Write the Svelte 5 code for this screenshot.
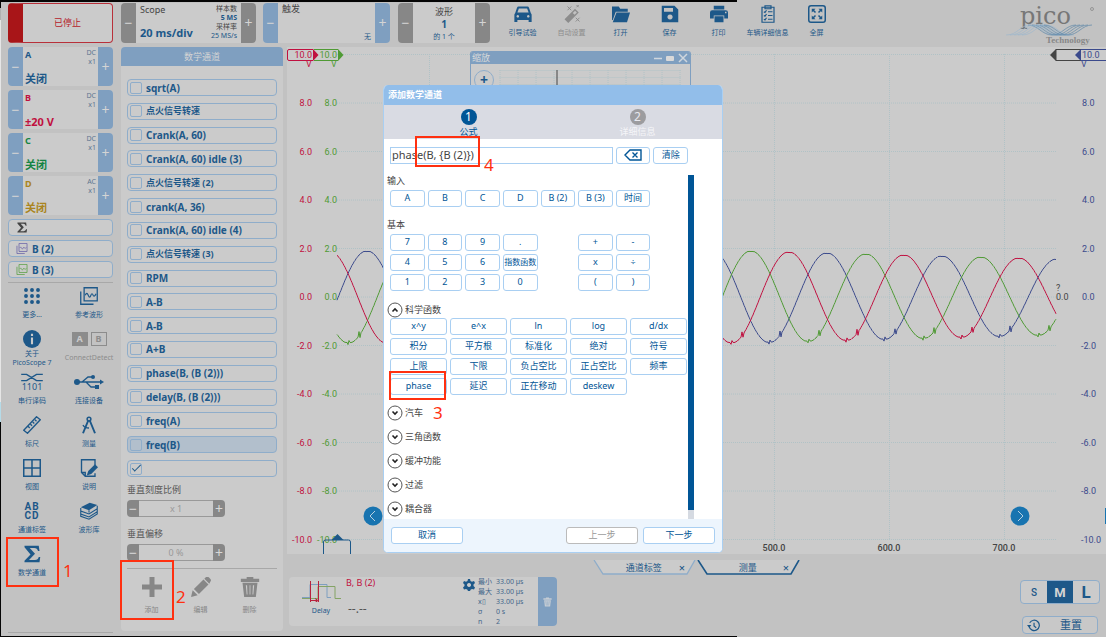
<script>
    const channels = [
        { name: 'A', coupling: 'DC', range: '关闭', tone: 'blue' },
        { name: 'B', coupling: 'DC', range: '±20 V', tone: 'red' },
        { name: 'C', coupling: 'DC', range: '关闭', tone: 'green' },
        { name: 'D', coupling: 'AC', range: '关闭', tone: 'gold' }
    ];

    const toolbar = [
        { icon: 'car', label: '引导试验' },
        { icon: 'wand', label: '自动设置', off: true },
        { icon: 'folder', label: '打开' },
        { icon: 'save', label: '保存' },
        { icon: 'print', label: '打印' },
        { icon: 'clipboard', label: '车辆详细信息' },
        { icon: 'full', label: '全屏' }
    ];

    const tools = [
        { icon: 'more', label: '更多...' },
        { icon: 'ref', label: '参考波形' },
        { icon: 'about', label: '关于\nPicoScope 7' },
        { icon: 'detect', label: 'ConnectDetect', off: true },
        { icon: 'serial', label: '串行译码' },
        { icon: 'usb', label: '连接设备' },
        { icon: 'ruler', label: '标尺' },
        { icon: 'compass', label: '测量' },
        { icon: 'views', label: '视图' },
        { icon: 'notes', label: '说明' },
        { icon: 'abcd', label: '通道标签' },
        { icon: 'books', label: '波形库' },
        { icon: 'sigma', label: '数学通道' }
    ];

    let mathChannels = $state([
        'sqrt(A)', '点火信号转速', 'Crank(A, 60)', 'Crank(A, 60) idle (3)', '点火信号转速 (2)',
        'crank(A, 36)', 'Crank(A, 60) idle (4)', '点火信号转速 (3)', 'RPM', 'A-B', 'A-B', 'A+B',
        'phase(B, (B (2)))', 'delay(B, (B (2)))', 'freq(A)', 'freq(B)', ''
    ].map((name) => ({ name, on: name === '' })));

    const inputs = ['A', 'B', 'C', 'D', 'B (2)', 'B (3)', '时间'];
    const keypad = [
        ['7', '8', '9', '.', null, '+', '-'],
        ['4', '5', '6', '指数函数', null, 'x', '÷'],
        ['1', '2', '3', '0', null, '(', ')']
    ].flat();
    const functions = [
        'x^y', 'e^x', 'ln', 'log', 'd/dx',
        '积分', '平方根', '标准化', '绝对', '符号',
        '上限', '下限', '负占空比', '正占空比', '频率',
        'phase', '延迟', '正在移动', 'deskew'
    ];
    const groups = ['汽车', '三角函数', '缓冲功能', '过滤', '耦合器'];
    const stats = [['最小', '33.00 µs'], ['最大', '33.00 µs'], ['x▯', '33.00 µs'], ['σ', '0 s'], ['n', '2']];

    let formula = $state('phase(B, {B (2)})');
    let size = $state('M');

    // Plot geometry
    const top = 54.5;
    const step = 48.5;
    const zero = 297;
    const volts = [10, 8, 6, 4, 2, 0, -2, -4, -6, -8, -10];
    const times = [429, 544, 659, 774, 889, 1004];

    // One trace: a sine with flat peaks that decays a little, with spikes around each trough
    function trace(peak) {
        const period = 115;
        let d = '';
        for (let x = 337; x <= 1056; x += 1) {
            const amp = x < 751 ? 45.5 : 45.5 - (x - 751) * 0.026;
            const phase = ((x - peak) % period + period) % period;
            const s = Math.cos((phase / period) * 2 * Math.PI);
            let y = zero - amp * Math.max(-1, Math.min(1, s * 1.015));
            y += Math.sin(x * 2.7 + peak) * 0.2;
            const k = Math.floor(phase);
            if (k === 57) y += 2;
            if (k === 58) y -= 2;
            if (k === 68) y -= 4;
            if (k === 69) y += 3;
            d += (d ? 'L' : 'M') + x + ' ' + y.toFixed(1);
        }
        return d;
    }

    const traces = [
        { tone: 'navy', d: trace(827) },
        { tone: 'green', d: trace(751) },
        { tone: 'red', d: trace(789) }
    ];
</script>

{#snippet icon(name)}
    <svg class="icon {name}" viewBox="0 0 24 24" aria-hidden="true">
        {#if name === 'car'}
            <path fill="currentColor" fill-rule="evenodd" d="M6 2h12q1.500 0 2 1.500L22.500 11q1 1 1 2v9.500h-4V20h-15v2.500h-4V13q0-1 1-2L4 3.500Q4.500 2 6 2zm.5 2.500L4.500 10h15l-2-5.500zM5 13.300a1.700 1.700 0 1 0 .1 0zm14 0a1.700 1.700 0 1 0 .1 0z" />
        {:else if name === 'wand'}
            <path fill="currentColor" fill-rule="evenodd" d="M2 19L16 5l5 5L7 24zM13 10.500l2.500 2.500L18.500 10 16 7.500z" />
            <path stroke="currentColor" stroke-width="1.300" d="M6 2l5 5m0-5L6 7m12-7l3 3m0-3l-3 3m-1 14l5 5m0-5l-5 5" />
        {:else if name === 'folder'}
            <path fill="currentColor" d="M0 2h9l2 3h10v4H5L1 20H0z" /><path fill="currentColor" d="M6 10h18l-4 13H1z" />
        {:else if name === 'save'}
            <path fill="currentColor" fill-rule="evenodd" d="M1 1h17l5 5v17H1zm3 3v5h12V4zm8 8.500a3.500 3.500 0 1 0 .1 0z" />
        {:else if name === 'print'}
            <path fill="currentColor" fill-rule="evenodd" d="M5 1h14v5H5zM3 7h18q3 0 3 3v8h-5v-4H5v4H0v-8q0-3 3-3zm17 2v2h2V9zM6 15h12v8H6z" />
        {:else if name === 'clipboard'}
            <path fill="none" stroke="currentColor" stroke-width="1.600" d="M4 3h16v20H4zM8 1h8v4H8z" />
            <path fill="none" stroke="currentColor" stroke-width="1.600" d="M6.500 9l1.500 1 2-3m2 2h6M6.500 14l1.500 1 2-3m2 2h6M6.500 19l1.500 1 2-3m2 2h6" />
        {:else if name === 'full'}
            <rect x="1" y="1" width="22" height="22" rx="3" fill="none" stroke="currentColor" stroke-width="2" />
            <path fill="currentColor" d="M5 5h5L5 10zm14 0v5l-5-5zM5 19v-5l5 5zm14 0h-5l5-5z" />
            <path stroke="currentColor" stroke-width="2" d="M6 6l4 4m8-4l-4 4m-8 8l4-4m8 4l-4-4" />
        {:else if name === 'more'}
            {#each [4, 12, 20] as cy}{#each [4, 12, 20] as cx}<circle {cx} {cy} r="2.600" fill="currentColor" />{/each}{/each}
        {:else if name === 'ref'}
            <path fill="none" stroke="currentColor" stroke-width="1.700" d="M1 6v17h17M5.500 1H23v17.500H5.500z" />
            <path fill="none" stroke="currentColor" stroke-width="1.500" d="M7 11q2-5 4 0 2 5 3.500 0 1.500-4 3 0 1.500 3 4-2" />
        {:else if name === 'about'}
            <circle cx="12" cy="12" r="12" fill="currentColor" /><path stroke="#cbcbcb" stroke-width="2.800" d="M12 10v9M12 5v3" />
        {:else if name === 'ruler'}
            <path fill="none" stroke="currentColor" stroke-width="1.800" d="M1 19L18 1l5 4L6 23zM7 14l2 2m1-5l2 2m1-5l2 2m1-5l2 2" />
        {:else if name === 'compass'}
            <path fill="none" stroke="currentColor" stroke-width="2.600" d="M11 6L4 23m9-17l7 17" /><path fill="none" stroke="currentColor" stroke-width="1.800" d="M4 12q2 4 8 4" /><circle cx="12" cy="4" r="2.500" fill="none" stroke="currentColor" stroke-width="2" />
        {:else if name === 'views'}
            <path fill="none" stroke="currentColor" stroke-width="2" d="M1 1h22v22H1zM12 1v22M1 12h22" />
        {:else if name === 'notes'}
            <path fill="none" stroke="currentColor" stroke-width="1.800" d="M20 8V1H2v17l5 5h13v-4M2 18h5v5" /><path fill="currentColor" d="M20 7l4 4-9 9-6 2 2-6z" />
        {:else if name === 'books'}
            <path fill="currentColor" d="M1 7L13 1l10 3-11 7z" /><path fill="none" stroke="currentColor" stroke-width="1.500" d="M1 8v4l11 4 11-7V5M1 12v4l11 4 11-7V9M1 16v3l11 4 11-7v-3M12 11v3" />
        {:else if name === 'sigma'}
            <path fill="currentColor" d="M2 1h19l1 7h-2q-1-4-5-4H9l7 7.500L8 20h8q4 0 5-4h2l-1 7H2v-2l8-8.500L2 3z" />
        {:else if name === 'plus'}
            <path fill="currentColor" d="M9 0h6v9h9v6h-9v9H9v-9H0V9h9z" />
        {:else if name === 'pencil'}
            <path fill="currentColor" d="M0 24l2-8 6 6zM3.500 14.500L15 3l6 6L9.500 20.500zM16 2l2-2q2-1 4 1l1 1q2 2 0 4l-1 2z" />
        {:else if name === 'trash'}
            <path fill="currentColor" fill-rule="evenodd" d="M8 0h8v2h7v4H1V2h7zM3 7h18l-2 17H5zm4 3l1 11h1L8.500 10zm4.500 0v11h1V10zm4 0L15 21h1l1-11z" />
        {:else if name === 'gear'}
            <path fill="currentColor" fill-rule="evenodd" d="M10 0h4l1 4 3 1.500 4-1.500 2 4-3 3v3l3 3-2 4-4-1-3 1.500-1 3h-4l-1-3L6 20l-4 1-2-4 3-3v-3L0 8l2-4 4 1.500L9 4zm2 8a4 4 0 1 0 .1 0z" />
        {:else if name === 'history'}
            <path fill="none" stroke="currentColor" stroke-width="2.200" d="M4 14a9.500 9.500 0 1 0 1-7M13 7v6l4 3" /><path fill="currentColor" d="M0 11h8l-4 5z" />
        {/if}
    </svg>
{/snippet}

{#snippet toolIcon(name)}
    {#if name === 'detect'}
        <span class="detect"><b>A</b><b>B</b></span>
    {:else if name === 'serial'}
        <span class="serial">
            <svg viewBox="0 0 24 10"><path fill="none" stroke="currentColor" stroke-width="1.600" d="M0 1.500h6l11 7h7M0 8.500h6l11-7h7" /></svg>1101
        </span>
    {:else if name === 'usb'}
        <svg class="usb" viewBox="0 0 30 16" aria-hidden="true">
            <circle cx="3" cy="8" r="3" fill="currentColor" /><path fill="none" stroke="currentColor" stroke-width="1.300" d="M3 8h24M8 8l6-5h4M12 8l5 5h5" />
            <path fill="currentColor" d="M26 5.500l4 2.500-4 2.500z" /><circle cx="19" cy="3" r="2" fill="currentColor" /><path fill="currentColor" d="M21 11h4v4h-4z" />
        </svg>
    {:else if name === 'abcd'}
        <span class="abcd">AB<br />CD</span>
    {:else}
        {@render icon(name)}
    {/if}
{/snippet}

<div class="app">
    <header class="top">
        <button class="stopped">已停止</button>
        <div class="stepper grey scope">
            <button>−</button>
            <div class="mid split">
                <div class="stack"><span>Scope</span><b class="big">20 ms/div</b></div>
                <div class="stack tiny"><span>样本数</span><b>5 MS</b><span>采样率</span><em>25 MS/s</em></div>
            </div>
            <button>+</button>
        </div>
        <div class="stepper trigger">
            <button>−</button>
            <div class="mid stack"><span>触发</span><em class="none">无</em></div>
            <button>+</button>
        </div>
        <div class="stepper grey wave">
            <button>−</button>
            <div class="mid centre"><span>波形</span><b>1</b><em>的 1 个</em></div>
            <button>+</button>
        </div>
        <nav class="toolbar">
            {#each toolbar as t}
                <button class="tool" disabled={t.off}>{@render icon(t.icon)}<span>{t.label}</span></button>
            {/each}
        </nav>
        <svg class="logo" viewBox="0 0 92 44" role="img" aria-label="pico Technology">
            <text class="pico" x="14" y="21">pico</text>
            <circle cx="86" cy="6" r="1.500" fill="none" stroke="#777" stroke-width=".6" />
            {#each [0, 4, 8, 12, 16] as o}
                <path fill="none" stroke="#9db8cd" stroke-width=".7" d="M{o} 32c12 0 14-10 24-10s14 10 24 10h4" />
                <path fill="none" stroke="#5d87a8" stroke-width=".7" d="M{o + 22} 22c10 0 14 10 24 10s14-10 24-10" />
            {/each}
            <text class="tech" x="40" y="40">Technology</text>
        </svg>
    </header>

    <div class="body">
        <aside class="left">
            {#each channels as c}
                <div class="stepper channel {c.tone}">
                    <button>−</button>
                    <div class="mid split">
                        <div class="stack"><b class="name">{c.name}</b><b class="big">{c.range}</b></div>
                        <div class="stack coupling"><span>{c.coupling}</span><span>x1</span></div>
                    </div>
                    <button>+</button>
                </div>
            {/each}
            <button class="quick dark">{@render icon('sigma')}</button>
            <button class="quick violet">{@render icon('ref')}<b>B (2)</b></button>
            <button class="quick lime">{@render icon('ref')}<b>B (3)</b></button>
            <div class="tools">
                {#each tools as t}
                    <button class="tool" class:two-line={t.label.includes('\n')} disabled={t.off}>
                        {@render toolIcon(t.icon)}<span>{t.label}</span>
                    </button>
                {/each}
            </div>
        </aside>

        <section class="math">
            <h2>数学通道</h2>
            <div class="list">
                {#each mathChannels as m}
                    <label class="item" class:hot={m.name === 'freq(B)'} class:latin={/^[\x20-\x7e]+$/.test(m.name)}>
                        <input type="checkbox" bind:checked={m.on} aria-label={m.name || 'phase'} />{m.name}
                    </label>
                {/each}
            </div>
            <label class="caption" for="scale">垂直刻度比例</label>
            <div class="spin"><button>−</button><input id="scale" value="x 1" disabled /><button>+</button></div>
            <label class="caption" for="offset">垂直偏移</label>
            <div class="spin"><button>−</button><input id="offset" value="0 %" disabled /><button>+</button></div>
            <div class="actions">
                <button class="tool">{@render icon('plus')}<span>添加</span></button>
                <button class="tool">{@render icon('pencil')}<span>编辑</span></button>
                <button class="tool">{@render icon('trash')}<span>删除</span></button>
            </div>
        </section>

        <main>
            <div class="plot">
                <svg viewBox="287 47 819 507">
                    {#each volts as v, i}
                        <path class="grid" d="M337 {top + i * step}H1056" />
                        {#if i > 0}
                            <text class="red end" x="312" y={top + i * step + 3}>{v.toFixed(1)}</text>
                            <text class="green end" x="337" y={top + i * step + 3}>{v.toFixed(1)}</text>
                            <text class="navy" x={v < 0 ? 1081 : 1082} y={top + i * step + 3}>{v.toFixed(1)}</text>
                        {/if}
                    {/each}
                    {#each times as x}<path class="grid" d="M{x}.5 54V540" />{/each}
                    {#each traces as t}<path class="trace {t.tone}" d={t.d} />{/each}

                    <path class="frame red" d="M313 49.500H289q-1.500 0-1.500 1.500v8q0 1.500 1.500 1.500h24" />
                    <path class="fill red" d="M313 49v12l5.500-6z" />
                    <path class="frame green" d="M314 49.500h24M314 60.500h24" />
                    <path class="fill green" d="M338 49v12l5.500-6z" />
                    <text class="red end" x="312" y="58">10.0</text><text class="red" x="306" y="67">V</text>
                    <text class="green end" x="337" y="58">10.0</text><text class="green" x="331" y="67">V</text>
                    <path class="frame dark" d="M1106 49.500h-50v11h50" />
                    <path class="fill dark" d="M1056 49v12l-6-6z" />
                    <path class="frame navy" d="M1081 49.500h25M1081 60.500h25" />
                    <path class="fill navy" d="M1081 49v12l-6-6z" />
                    <text class="navy" x="1082" y="58">10.0</text><text class="navy" x="1081" y="67">V</text>
                    <text class="dark" x="1056" y="291">?</text><text class="dark" x="1056" y="300">0.0</text>

                    <path class="frame blue" d="M323.500 554v-12q0-2 2-2h23q2 0 2 2v12" />
                    <path class="fill blue" d="M331.500 540l6-6 6 6z" />
                    {#each ['500.0', '600.0', '700.0'] as t, i}
                        <text class="dark middle" x={774 + i * 115} y="551">{t}</text>
                    {/each}
                    <circle class="knob" cx="373" cy="516" r="9.500" /><path class="arrow" d="M375 511l-5 5 5 5" />
                    <circle class="knob" cx="1020" cy="516" r="9.500" /><path class="arrow" d="M1018 511l5 5-5 5" />
                    <path class="knob" d="M1105 508h1v16h-1z" />
                </svg>

                <section class="zoom">
                    <header>缩放
                        <svg viewBox="0 0 34 10"><path stroke="#cfd6dd" stroke-width="1.500" d="M0 5.500h8M25 1l8 8m0-8l-8 8" /><rect x="12" y="3" width="8" height="5" rx="1" fill="#d9d9d9" /></svg>
                    </header>
                    <div class="zoom-body">
                        <button class="zoom-in" aria-label="放大">+</button>
                        <svg viewBox="0 0 184 40">
                            {#each Array(11) as _, i}<path class="grid" d="M{i * 18 + 1}.5 0V40" />{/each}
                            {#each Array(6) as _, i}<path class="grid" d="M1 {i * 7}.5H182" />{/each}
                            <path class="frame dark" d="M58.500 0V40" />
                        </svg>
                    </div>
                </section>
            </div>

            <footer class="bottom">
                <div class="measure">
                    <div class="delay">
                        <svg viewBox="0 0 40 22">
                            <path fill="none" stroke="#7f9fc0" d="M1 17.500h8V4.500h17v13h4" /><path fill="none" stroke="#84a365" d="M1 18.500h16V6.500h17v12h6" />
                            <path fill="none" stroke="#b8203c" d="M9.500 1v21M17.500 1v21M10 20.500h6m-2-2l3 2-3 2" />
                        </svg>
                        <span>Delay</span>
                    </div>
                    <div class="reading"><span>B, B (2)</span><i>--.--</i></div>
                    {@render icon('gear')}
                    <table>
                        <tbody>
                            {#each stats as [k, v]}<tr><th>{k}</th><td>{v}</td></tr>{/each}
                        </tbody>
                    </table>
                    <button class="remove" aria-label="删除">{@render icon('trash')}</button>
                </div>
                <div class="tabs">
                    <button class="tab">
                        <svg viewBox="0 0 103 15"><path fill="#cbcbcb" stroke="#8fadca" stroke-width="1.300" d="M1 0l9 14h84l8-14" /></svg>
                        <span>通道标签</span><b>×</b>
                    </button>
                    <button class="tab current">
                        <svg viewBox="0 0 103 15"><path fill="#cbcbcb" stroke="#1d5889" stroke-width="1.600" d="M1 0l9 14h84l8-14" /></svg>
                        <span>测量</span><b>×</b>
                    </button>
                </div>
                <div class="corner">
                    <div class="sizes">
                        {#each ['S', 'M', 'L'] as s}
                            <button class="size{s}" class:on={size === s} onclick={() => (size = s)}>{s}</button>
                        {/each}
                    </div>
                    <button class="reset">{@render icon('history')}<span>重置</span></button>
                </div>
            </footer>
        </main>
    </div>

    <div class="overlay">
        <div class="dialog" role="dialog" aria-labelledby="dlg-title">
            <h1 id="dlg-title">添加数学通道</h1>
            <ol class="steps">
                <li class="now"><i>1</i>公式</li>
                <li><i>2</i>详细信息</li>
            </ol>
            <div class="keys entry">
                <input bind:value={formula} aria-label="公式" />
                <button aria-label="退格" onclick={() => (formula = formula.slice(0, -1))}>
                    <svg viewBox="0 0 18 12"><path fill="none" stroke="currentColor" stroke-width="1.400" d="M6 1h11v10H6L1 6zM8.500 3.500l5 5m0-5l-5 5" /></svg>
                </button>
                <button onclick={() => (formula = '')}>清除</button>
            </div>
            <div class="scroll">
                <div class="content">
                    <h3>输入</h3>
                    <div class="keys">
                        {#each inputs as k}<button>{k}</button>{/each}
                    </div>
                    <h3>基本</h3>
                    <div class="keys pad">
                        {#each keypad as k}
                            {#if k}<button class:small={k.length > 2}>{k}</button>{:else}<span></span>{/if}
                        {/each}
                    </div>
                    <button class="fold open">
                        <svg viewBox="0 0 16 16"><circle cx="8" cy="8" r="7" /><path d="M5.500 9.500L8 7l2.500 2.500" /></svg>科学函数
                    </button>
                    <div class="keys fns">
                        {#each functions as f}<button>{f}</button>{/each}
                    </div>
                    {#each groups as g}
                        <button class="fold">
                            <svg viewBox="0 0 16 16"><circle cx="8" cy="8" r="7" /><path d="M5.500 6.500L8 9l2.500-2.500" /></svg>{g}
                        </button>
                    {/each}
                </div>
                <div class="bar"></div>
            </div>
            <div class="buttons">
                <button>取消</button>
                <button class="back" disabled>上一步</button>
                <button>下一步</button>
            </div>
        </div>
    </div>

    <div class="mark m1"><span>1</span></div>
    <div class="mark m2"><span>2</span></div>
    <div class="mark m3"><span>3</span></div>
    <div class="mark m4"><span>4</span></div>
</div>

<style>
    :global(body) {
        margin: 0;
        background: #c2c2c2;
    }
    .app {
        position: relative;
        box-sizing: border-box;
        min-height: 100vh;
        padding: 3px 0 0 8px;
        display: flex;
        flex-direction: column;
        gap: 4px;
        overflow: hidden;
        font-family: "Noto Sans", "Noto Sans CJK SC", sans-serif;
        font-size: 9px;
        line-height: 12px;
        color: #1d5889;
        background:
            linear-gradient(#050505, #050505) 0 0 / 737px 2px no-repeat,
            linear-gradient(#050505, #050505) 0 100% / 737px 1px no-repeat,
            linear-gradient(#050505 8px, #b0b0b0 8px 20px, #e6e6e6 20px 402px, #b5dbe8 402px 422px, #050505 422px) 0 0 / 1px 100% no-repeat,
            #c2c2c2;
    }
    button, input {
        font: inherit;
        color: inherit;
        margin: 0;
        padding: 0;
        border: 0;
        background: none;
        box-sizing: border-box;
    }
    h1, h2, h3, ol { margin: 0; padding: 0; }
    em, i { font-style: normal; }
    svg { display: block; }
    .icon { width: 18px; height: 18px; flex: none; }

    /* top bar */
    .top { display: flex; height: 40px; }
    .stopped {
        width: 105px;
        margin-right: 8px;
        border: 1px solid #b8303a;
        border-left: 15px solid #a81518;
        border-radius: 4px;
        background: #cbcbcb;
        color: #b5202a;
    }
    .stepper {
        display: flex;
        background: #cbcbcb;
        border-radius: 4px;
        overflow: hidden;
    }
    .stepper > button {
        width: 15px;
        flex: none;
        background: #7f9fc0;
        color: #d4d4d4;
        font-size: 14px;
    }
    .stepper.grey > button { background: #878787; }
    .mid { flex: 1; display: flex; padding: 0 4px; }
    .stack { display: flex; flex-direction: column; justify-content: space-between; }
    .split { justify-content: space-between; }
    .big { font-size: 11px; line-height: 14px; white-space: nowrap; }
    .scope { width: 135px; margin-right: 7px; color: #444; }
    .scope b, .scope em, .trigger em, .wave b, .wave em { color: #1d5889; }
    .scope .stack:first-child { padding: 1px 0 3px; }
    .tiny { font-size: 7px; line-height: 9px; text-align: right; padding: 1px 0 3px; }
    .tiny span, .tiny b, .tiny em { display: block; white-space: nowrap; }
    .trigger { width: 127px; margin-right: 8px; color: #444; }
    .none { font-size: 7px; text-align: right; }
    .wave { width: 92px; margin-right: 8px; color: #444; }
    .centre { flex-direction: column; align-items: center; padding-top: 3px; }
    .wave b { font-size: 10px; line-height: 13px; }
    .wave em { font-size: 7px; }
    .toolbar { display: flex; }
    .tool {
        display: flex;
        flex-direction: column;
        align-items: center;
        gap: 5px;
        font-size: 7px;
        line-height: 9px;
        white-space: pre;
    }
    .tool:disabled { color: #8c8c8c; }
    .toolbar .tool { width: 49px; padding-top: 2px; }
    .logo { width: 92px; height: 44px; margin: 0 8px 0 auto; }
    .pico { font: 24px "DejaVu Serif", serif; fill: #777; }
    .tech { font: bold 9px "Liberation Serif", serif; fill: #888; }

    /* columns */
    .body { flex: 1; display: flex; }
    .left { width: 105px; margin-right: 8px; display: flex; flex-direction: column; }
    .channel { height: 39px; margin-bottom: 4px; }
    .channel .mid { padding: 0 2px; }
    .channel .name { font-size: 9px; line-height: 15px; }
    .coupling { justify-content: flex-start; font-size: 7px; line-height: 9px; color: #5f7690; text-align: right; }
    .stack.coupling { padding-top: 1px; }
    .red { --ink: #c01040; color: #c01040; }
    .green { --ink: #4f9a34; }
    .channel.green { color: #158443; }
    .gold { color: #aa8420; }
    .navy { --ink: #3b4a8c; }
    .dark { --ink: #444; }
    .blue { --ink: #1d5889; }
    .quick {
        display: flex;
        align-items: center;
        gap: 4px;
        height: 17px;
        margin-bottom: 4px;
        padding-left: 7px;
        border: 1px solid #8fadca;
        border-radius: 4px;
        background: #cbcbcb;
        font-size: 10px;
    }
    .quick .icon { width: 12px; height: 11px; color: #444; }
    .quick.violet .icon { color: #6a63a8; }
    .quick.lime .icon { color: #5aa046; }
    .tools {
        display: grid;
        grid-template-columns: 48px 48px;
        grid-auto-rows: 43px;
        column-gap: 9px;
        padding-top: 4px;
        border-top: 1px solid #a8a8a8;
        border-bottom: 1px solid #a8a8a8;
        flex: 1;
        margin-bottom: 4px;
    }
    .tools .two-line { gap: 1px; }
    .detect { display: flex; gap: 3px; height: 18px; align-items: center; }
    .detect b { width: 14px; height: 12px; border: 1px solid #8c8c8c; font-size: 9px; line-height: 12px; text-align: center; }
    .detect b:first-child { background: #8c8c8c; color: #cbcbcb; }
    .serial { font-size: 9px; line-height: 9px; height: 18px; text-align: center; }
    .serial svg { width: 22px; height: 9px; }
    .usb { width: 30px; height: 18px; }
    .abcd { font: bold 10px/9px Roboto, sans-serif; letter-spacing: 1px; height: 18px; }

    .math {
        width: 162px;
        box-sizing: border-box;
        margin: 0 4px 6px 0;
        padding: 0 6px;
        display: flex;
        flex-direction: column;
        background: #cbcbcb;
        border-radius: 4px;
    }
    .math h2 {
        margin: 0 -6px 13px;
        background: #7f9fc0;
        color: #d4d4d4;
        font-size: 9px;
        font-weight: 400;
        line-height: 19px;
        text-align: center;
        border-radius: 4px 4px 0 0;
    }
    .list { flex: 1; display: flex; flex-direction: column; justify-content: space-between; }
    .item {
        display: flex;
        align-items: center;
        box-sizing: border-box;
        height: 17px;
        padding-left: 2px;
        gap: 4px;
        font-weight: 700;
        border: 1px solid #8fadca;
        border-radius: 4px;
    }
    .latin { font-size: 10px; }
    .hot { background: #b2bfcc; }
    .item input {
        appearance: none;
        width: 12px;
        height: 12px;
        border: 1px solid #8fadca;
        border-radius: 2px;
        display: grid;
        place-items: center;
    }
    .item input:checked::after {
        content: "";
        width: 8px;
        height: 3px;
        margin-bottom: 3px;
        border: solid #1d5889;
        border-width: 0 0 1px 1px;
        transform: rotate(-45deg);
    }
    .caption { color: #555; margin: 7px 0 4px; line-height: 12px; }
    .spin { display: flex; width: 98px; height: 17px; margin-bottom: 4px; border-radius: 4px; overflow: hidden; color: #999; }
    .spin button { width: 12px; background: #878787; color: #d8d8d8; font-size: 14px; line-height: 14px; }
    .spin input { flex: 1; min-width: 0; text-align: center; border: solid #999; border-width: 1px 0; }
    .actions {
        display: grid;
        grid-template-columns: repeat(3, 49px);
        margin-top: 3px;
        padding: 8px 0 17px;
        border-top: 1px solid #a8a8a8;
        color: #878787;
    }
    .actions .tool { gap: 8px; color: #878787; }
    .actions .icon { width: 20px; height: 20px; }

    /* plot */
    main { flex: 1; min-width: 0; display: flex; flex-direction: column; }
    .plot { position: relative; background: #cbcbcb; }
    .plot > svg { width: 100%; }
    .plot text { font: 9px Roboto, sans-serif; fill: var(--ink); }
    .plot .end { text-anchor: end; }
    .plot .middle { text-anchor: middle; font-weight: 500; }
    .grid { fill: none; stroke: #b0c2c6; stroke-dasharray: 1 1; }
    .trace { fill: none; stroke: var(--ink); }
    .frame { fill: none; stroke: var(--ink); stroke-width: 1; }
    .fill { fill: var(--ink); }
    .knob { fill: #1874b0; }
    .arrow { fill: none; stroke: #b8d0e0; }
    .zoom {
        position: absolute;
        left: 183px;
        top: 4px;
        width: 219px;
        border: solid #7f9fc0;
        border-width: 0 1px;
        background: #cbcbcb;
        border-radius: 3px 3px 0 0;
        overflow: hidden;
    }
    .zoom header {
        display: flex;
        justify-content: space-between;
        align-items: center;
        height: 13px;
        padding: 0 2px 0 1px;
        background: #7f9fc0;
        color: #d9d9d9;
    }
    .zoom header svg { width: 34px; height: 10px; }
    .zoom-body { display: flex; gap: 4px; padding: 6px 7px 0 3px; }
    .zoom-body svg { flex: 1; height: 40px; }
    .zoom-in {
        width: 20px;
        height: 20px;
        font-size: 14px;
        font-weight: 700;
        border: 1px solid #8fadca;
        border-radius: 50%;
    }

    /* bottom strip */
    .bottom { flex: 1; display: flex; align-items: flex-start; }
    .measure {
        display: flex;
        width: 268px;
        height: 49px;
        margin: 23px 0 0 2px;
        background: #cbcbcb;
        border-radius: 4px;
        overflow: hidden;
    }
    .delay { width: 40px; margin-left: 12px; text-align: center; font-size: 7px; }
    .delay svg { width: 40px; height: 22px; margin: 3px 0; }
    .reading { flex: 1; display: flex; flex-direction: column; gap: 14px; padding-left: 5px; color: #c01040; }
    .reading i { color: #555; padding-left: 2px; font-size: 12px; }
    .measure .gear { width: 12px; height: 12px; margin: 2px 3px 0 0; }
    table { width: 60px; height: 49px; border-collapse: collapse; font-size: 7px; line-height: 9px; color: #44668a; }
    th, td { padding: 0; font-weight: 400; text-align: left; white-space: nowrap; }
    th { width: 18px; }
    .remove { width: 19px; background: #7f9fc0; color: #c6cdd4; display: grid; place-items: center; }
    .remove .icon { width: 9px; height: 12px; }
    .tabs { display: flex; gap: 1px; margin: 6px 0 0 36px; }
    .tab { position: relative; display: flex; align-items: center; justify-content: flex-end; width: 103px; height: 15px; padding-right: 11px; }
    .tab svg { position: absolute; inset: 0; width: 100%; height: 15px; }
    .tab span, .tab b { position: relative; }
    .tab b { font-size: 11px; font-weight: 500; }
    .tab span { flex: 1; text-align: center; padding-left: 16px; }
    .corner { display: flex; flex-direction: column; align-items: center; gap: 12px; margin: 26px 6px 0 auto; }
    .sizes { display: flex; border: 1px solid #8fadca; border-radius: 4px; background: #cbcbcb; overflow: hidden; }
    .sizes button { width: 26px; height: 22px; font: 500 10px Roboto, sans-serif; }
    .sizes .sizeM { font-size: 13px; font-weight: 700; }
    .sizes .sizeL { font-size: 17px; font-weight: 700; }
    .sizes .on { background: #1d5889; color: #d4d4d4; }
    .reset { display: flex; align-items: center; width: 76px; height: 18px; padding: 0 4px; border: 1px solid #8fadca; border-radius: 4px; font-size: 11px; background: #c8c8c8; }
    .reset .icon { width: 13px; height: 13px; }
    .reset span { flex: 1; text-align: center; padding-left: 9px; }

    /* dialog */
    .overlay {
        position: absolute;
        inset: 0;
        display: flex;
        align-items: center;
        justify-content: center;
    }
    .dialog {
        width: 340px;
        box-sizing: border-box;
        border: 1px solid #a9cff2;
        border-top: 0;
        border-radius: 5px;
        overflow: hidden;
        background: #fff;
        color: #005596;
    }
    .dialog h1 { padding-left: 4px; background: #92beea; color: #fff; font-size: 9px; line-height: 20px; }
    .steps { display: grid; grid-template-columns: 1fr 1fr; height: 34px; background: #d9dbe3; list-style: none; }
    .steps li { display: flex; flex-direction: column; align-items: center; padding-top: 4px; color: #f5f5f8; line-height: 14px; }
    .steps i { width: 16px; height: 16px; border-radius: 50%; background: #9c9c9f; color: #e8e8ee; font-size: 12px; line-height: 16px; text-align: center; }
    .steps .now { color: #005596; }
    .steps .now i { background: #005596; color: #fff; }
    .keys { display: grid; grid-template-columns: repeat(8, 1fr); gap: 3px; }
    .keys button, .buttons button {
        height: 17px;
        border: 1px solid #a9cff2;
        border-radius: 3px;
        background: #fff;
        white-space: nowrap;
    }
    .keys .small { font-size: 8px; }
    .entry { padding: 8px 34px 11px 6px; }
    .entry input { grid-column: span 6; min-width: 0; padding: 0 1px; border: 1px solid #a9cff2; color: #444; font-size: 11px; }
    .entry svg { width: 18px; height: 12px; margin: auto; }
    .pad > :nth-child(7n + 1) { grid-column: 1; }
    .scroll { display: flex; height: 344px; padding-right: 28px; }
    .content { flex: 1; padding: 0 0 0 6px; color: #005596; overflow: hidden; }
    .content .keys { width: 298px; }
    .content h3 { margin-left: -3px; color: #444; font-size: 9px; font-weight: 400; line-height: 12px; margin-bottom: 3px; }
    .keys + h3 { margin-top: 12px; }
    .content .fns { width: 297px; grid-template-columns: repeat(5, 1fr); margin-bottom: 10px; }
    .fold { display: flex; align-items: center; gap: 2px; height: 16px; margin: 0 0 8px -3px; color: #444; }
    .fold.open { margin: 11px 0 0 -3px; }
    .fold svg { width: 16px; height: 16px; }
    .fold circle { fill: none; stroke: #555; }
    .fold path { fill: none; stroke: #222; stroke-width: 1.6; }
    .bar { width: 6px; flex: none; background: linear-gradient(#005596 335px, #d5dae2 335px); }
    .buttons { display: flex; gap: 5px; padding: 8px 7px; background: #edf5fd; }
    .buttons button { width: 72px; }
    .buttons .back { margin-left: auto; border-color: #bbb; color: #999; }

    /* numbered callouts */
    .mark { position: absolute; box-sizing: border-box; border: 2px solid #ff3010; color: #ff3010; font-size: 17px; line-height: 20px; }
    .mark span { position: absolute; left: 100%; margin-left: 6px; }
    .m1 { left: 6px; top: 537px; width: 53px; height: 50px; }
    .m1 span { top: 22px; }
    .m2 { left: 120px; top: 560px; width: 54px; height: 60px; }
    .m2 span { top: 25px; margin-left: 4px; }
    .m3 { left: 389px; top: 371px; width: 57px; height: 29px; }
    .m3 span { left: 36px; top: 30px; }
    .m4 { left: 415px; top: 136px; width: 65px; height: 31px; }
    .m4 span { top: 17px; }
</style>
